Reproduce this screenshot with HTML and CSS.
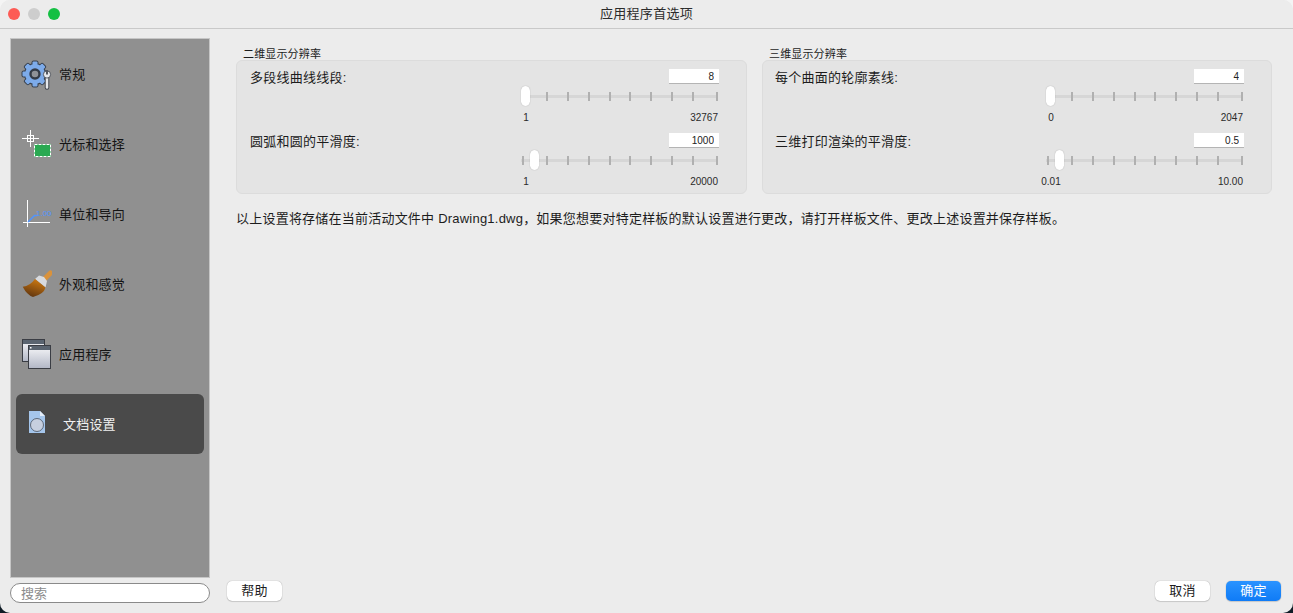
FILE: index.html
```html
<!DOCTYPE html>
<html lang="zh-CN">
<head>
<meta charset="utf-8">
<title>应用程序首选项</title>
<link rel="stylesheet" href="styles.css">
</head>
<body>
<div class="window">
  <header class="titlebar">
    <div class="lights"><span class="light red"></span><span class="light grey"></span><span class="light green"></span></div>
    <div class="title">应用程序首选项</div>
  </header>
  <div class="main">
    <aside class="left">
      <nav class="sidebar">
        <div class="item">
          <svg class="icon" viewBox="0 0 32 32">
            <g fill="#39414e">
              <circle cx="15" cy="16" r="11"/>
              <rect x="11.500" y="2.500" width="7" height="27" rx="2"/>
              <rect x="11.500" y="2.500" width="7" height="27" rx="2" transform="rotate(45 15 16)"/>
              <rect x="11.500" y="2.500" width="7" height="27" rx="2" transform="rotate(90 15 16)"/>
              <rect x="11.500" y="2.500" width="7" height="27" rx="2" transform="rotate(135 15 16)"/>
            </g>
            <g fill="#7dabea">
              <circle cx="15" cy="16" r="10"/>
              <rect x="12.500" y="3.500" width="5" height="25" rx="1"/>
              <rect x="12.500" y="3.500" width="5" height="25" rx="1" transform="rotate(45 15 16)"/>
              <rect x="12.500" y="3.500" width="5" height="25" rx="1" transform="rotate(90 15 16)"/>
              <rect x="12.500" y="3.500" width="5" height="25" rx="1" transform="rotate(135 15 16)"/>
            </g>
            <circle cx="15" cy="16" r="4.500" fill="#8f9298" stroke="#343b47" stroke-width="2.400"/>
            <path d="M27 19V29.500" stroke="#3a3f48" stroke-width="4.500" stroke-linecap="round"/>
            <path d="M27 19V29.500" stroke="#e6e8ec" stroke-width="2.600" stroke-linecap="round"/>
            <circle cx="27" cy="16.500" r="3.600" fill="#e6e8ec" stroke="#3a3f48" stroke-width="0.800"/>
            <rect x="26" y="12" width="2" height="4.500" fill="#52565e"/>
          </svg>
          <span>常规</span>
        </div>
        <div class="item">
          <svg class="icon" viewBox="0 0 32 32">
            <path d="M2 10.500H19M10.500 2V19" stroke="#fff" stroke-width="1"/>
            <rect x="7.500" y="7.500" width="6" height="6" fill="none" stroke="#fff" stroke-width="1"/>
            <rect x="14" y="16" width="17" height="13" fill="#2aa952"/>
            <rect x="14.500" y="16.500" width="16" height="12" fill="none" stroke="#fff" stroke-dasharray="3 1"/>
          </svg>
          <span>光标和选择</span>
        </div>
        <div class="item">
          <svg class="icon" viewBox="0 0 32 32">
            <path d="M7.500 2V29M3 24.500H30" stroke="#fff" stroke-width="1"/>
            <path d="M8 24L14.500 17.500H17" fill="none" stroke="#4f94ff" stroke-width="1.500"/>
            <text class="unit-text" x="16" y="18">1.00</text>
          </svg>
          <span>单位和导向</span>
        </div>
        <div class="item">
          <svg class="icon" viewBox="0 0 32 32">
            <defs>
              <linearGradient id="bristle" x1="0.7" y1="0" x2="0.3" y2="1">
                <stop offset="0" stop-color="#cf7a10"/>
                <stop offset="1" stop-color="#5f3510"/>
              </linearGradient>
            </defs>
            <path d="M30.500 5L24 11.500" stroke="#d9923c" stroke-width="5" stroke-linecap="round"/>
            <path d="M19 7.500L24 9L27 13L25.500 19.500L15 11Z" fill="#d8dade"/>
            <path d="M15 11L25.500 19.500Q24 26 13 29Q7 27 2.700 18.700Q10 18 15 11Z" fill="url(#bristle)"/>
          </svg>
          <span>外观和感觉</span>
        </div>
        <div class="item">
          <svg class="icon" viewBox="0 0 32 32">
            <defs>
              <linearGradient id="pane" x1="0" y1="0" x2="0" y2="1">
                <stop offset="0" stop-color="#f8f8fa"/>
                <stop offset="1" stop-color="#b2b7c6"/>
              </linearGradient>
            </defs>
            <rect x="2.500" y="1.500" width="22" height="22" fill="url(#pane)" stroke="#3a3d44"/>
            <rect x="3" y="2" width="21" height="4" fill="#5a6470"/>
            <rect x="8.500" y="7.500" width="22" height="23" fill="url(#pane)" stroke="#3a3d44"/>
            <rect x="9" y="8" width="21" height="4" fill="#5a6470"/>
            <rect x="10" y="9" width="1.500" height="1.500" fill="#fff"/>
          </svg>
          <span>应用程序</span>
        </div>
        <div class="item active">
          <svg class="icon" viewBox="0 0 32 32">
            <path d="M8 3H19L24 8V25H8Z" fill="#a5c6ec"/>
            <path d="M19 3L24 8H19Z" fill="#e4eefa"/>
            <circle cx="16" cy="17" r="6.500" fill="#c6cfdf" stroke="#47505e" stroke-width="0.8"/>
          </svg>
          <span>文档设置</span>
        </div>
      </nav>
      <input class="search" type="text" placeholder="搜索">
    </aside>
    <section class="content">
      <div class="groups">
        <div class="panel">
          <div class="panel-title">二维显示分辨率</div>
          <div class="group">
            <div class="control">
              <div class="head"><span class="label">多段线曲线线段:</span><input class="value" type="text" value="8"></div>
              <div class="slider">
                <div class="track"><i></i><i></i><i></i><i></i><i></i><i></i><i></i><i></i><i></i><i></i></div>
                <span class="thumb" style="left:0"></span>
              </div>
              <div class="scale"><span class="min"><b>1</b></span><span>32767</span></div>
            </div>
            <div class="control">
              <div class="head"><span class="label">圆弧和圆的平滑度:</span><input class="value" type="text" value="1000"></div>
              <div class="slider">
                <div class="track"><i></i><i></i><i></i><i></i><i></i><i></i><i></i><i></i><i></i><i></i></div>
                <span class="thumb" style="left:9px"></span>
              </div>
              <div class="scale"><span class="min"><b>1</b></span><span>20000</span></div>
            </div>
          </div>
        </div>
        <div class="panel">
          <div class="panel-title">三维显示分辨率</div>
          <div class="group group-right">
            <div class="control">
              <div class="head"><span class="label">每个曲面的轮廓素线:</span><input class="value" type="text" value="4"></div>
              <div class="slider">
                <div class="track"><i></i><i></i><i></i><i></i><i></i><i></i><i></i><i></i><i></i><i></i></div>
                <span class="thumb" style="left:0"></span>
              </div>
              <div class="scale"><span class="min"><b>0</b></span><span>2047</span></div>
            </div>
            <div class="control">
              <div class="head"><span class="label">三维打印渲染的平滑度:</span><input class="value" type="text" value="0.5"></div>
              <div class="slider">
                <div class="track"><i></i><i></i><i></i><i></i><i></i><i></i><i></i><i></i><i></i><i></i></div>
                <span class="thumb" style="left:9px"></span>
              </div>
              <div class="scale"><span class="min"><b>0.01</b></span><span>10.00</span></div>
            </div>
          </div>
        </div>
      </div>
      <p class="note">以上设置将存储在当前活动文件中 Drawing1.dwg，如果您想要对特定样板的默认设置进行更改，请打开样板文件、更改上述设置并保存样板。</p>
      <footer class="footer">
        <button class="btn" type="button">帮助</button>
        <div class="footer-right">
          <button class="btn" type="button">取消</button>
          <button class="btn primary" type="button">确定</button>
        </div>
      </footer>
    </section>
  </div>
</div>
</body>
</html>
```

FILE: styles.css
```css
* { box-sizing: border-box; }

html, body {
  margin: 0;
  height: 100%;
  overflow: hidden;
}

body {
  background: linear-gradient(#f4f4f4 50%, #101c26 50%);
  font-family: "Liberation Sans", "Noto Sans CJK SC", sans-serif;
  color: #1c1c1c;
}

.window {
  height: 613px;
  display: flex;
  flex-direction: column;
  background: #ececec;
  border-radius: 10px;
  overflow: hidden;
}

.titlebar {
  position: relative;
  height: 29px;
  flex: none;
  display: flex;
  align-items: center;
  justify-content: center;
  background: #ececec;
  border-bottom: 1px solid #c9c9c9;
}

.lights {
  position: absolute;
  left: 8px;
  top: 8px;
  display: flex;
  gap: 8px;
}

.light {
  width: 12px;
  height: 12px;
  border-radius: 50%;
}

.red { background: #fd5b55; }
.grey { background: #cdcdcd; }
.green { background: #14c043; }

.title {
  font-size: 13px;
  line-height: 28px;
  letter-spacing: 0.3px;
  color: #2c2c2c;
}

.main {
  flex: 1;
  min-height: 0;
  display: flex;
  padding: 9px 12px 10px 10px;
}

.left {
  width: 200px;
  flex: none;
  display: flex;
  flex-direction: column;
  gap: 5px;
}

.sidebar {
  flex: 1;
  display: flex;
  flex-direction: column;
  gap: 10px;
  padding: 5px;
  background: #909090;
  border: 1px solid #c6c6c6;
}

.item {
  height: 60px;
  flex: none;
  display: flex;
  align-items: center;
  gap: 7px;
  padding-left: 4px;
  font-size: 13px;
  letter-spacing: 0.2px;
  color: #141414;
  border-radius: 6px;
}

.item span { padding-bottom: 2px; }

.item.active {
  background: #4a4a4a;
  color: #f0f0f0;
  gap: 10px;
  padding-left: 5px;
}

.icon {
  width: 32px;
  height: 32px;
  flex: none;
}

.unit-text {
  font-size: 8px;
  letter-spacing: 0;
  fill: #4f94ff;
}

.search {
  height: 20px;
  flex: none;
  width: 100%;
  padding: 0 10px;
  background: #fff;
  border: 1px solid #8a8a8a;
  border-radius: 10px;
  font: 13px "Liberation Sans", "Noto Sans CJK SC", sans-serif;
  outline: none;
}

.search::placeholder {
  color: #8c8c8c;
  opacity: 1;
}

.content {
  flex: 1;
  min-width: 0;
  display: flex;
  flex-direction: column;
  padding: 10px 0 2px 17px;
}

.groups {
  display: grid;
  grid-template-columns: 511px 510px;
  gap: 15px;
  margin-left: 9px;
}

.panel-title {
  height: 12px;
  padding-left: 7px;
  font-size: 11px;
  line-height: 12px;
  letter-spacing: 0.15px;
}

.group {
  height: 134px;
  padding: 8px 27px 0 13px;
  background: #e4e4e4;
  border: 1px solid #dcdcdc;
  border-radius: 6px;
}

.group-right { padding-left: 12px; }

.control { height: 64px; }

.head {
  height: 15px;
  display: flex;
  justify-content: space-between;
  align-items: flex-start;
}

.label {
  font-size: 13px;
  line-height: 17px;
  letter-spacing: 0.25px;
}

.value {
  width: 50px;
  height: 15px;
  padding: 0 5px 0 0;
  border: 0;
  border-bottom: 1px solid #b4b4b4;
  background: #fff;
  text-align: right;
  font: 10px "Liberation Sans", sans-serif;
  color: #222;
  outline: none;
}

.slider {
  position: relative;
  height: 20px;
  margin: 2px 0 0 271px;
  display: flex;
  align-items: center;
}

.track {
  width: 196px;
  height: 3px;
  display: flex;
  align-items: center;
  background: #d6d6d6;
}

.track i {
  width: 1.5px;
  height: 9px;
  flex: none;
  margin-left: 19.5px;
  background: #b0b0b0;
}

.track i:nth-child(1) { margin-left: 1px; }
.track i:nth-child(2) { margin-left: 22.5px; }
.track i:nth-child(6) { margin-left: 18.5px; }
.track i:nth-child(10) { margin-left: 22.5px; }

.thumb {
  position: absolute;
  top: 0;
  width: 9px;
  height: 20px;
  background: #fff;
  border-radius: 5px;
  box-shadow: 0 0 1px rgba(0, 0, 0, 0.35);
}

.scale {
  height: 15px;
  margin: 4px 0 0 270px;
  padding-right: 1px;
  display: flex;
  justify-content: space-between;
  font-size: 10px;
  line-height: 15px;
  color: #2a2a2a;
}

.min {
  width: 12px;
  display: flex;
  justify-content: center;
  white-space: nowrap;
}

.min b { font-weight: 400; }

.note {
  margin: 16px 0 0 9px;
  font-size: 13px;
  line-height: 18px;
  letter-spacing: 0.22px;
}

.footer {
  margin-top: auto;
  display: flex;
  justify-content: space-between;
}

.footer-right {
  display: flex;
  gap: 16px;
}

.btn {
  width: 55px;
  height: 20px;
  padding: 0;
  border: 0;
  border-radius: 5px;
  background: #fff;
  box-shadow: 0 0 1px rgba(0, 0, 0, 0.4), 0 1px 1px rgba(0, 0, 0, 0.12);
  font: 13px/20px "Liberation Sans", "Noto Sans CJK SC", sans-serif;
  letter-spacing: 0.2px;
  color: #1c1c1c;
}

.primary {
  background: linear-gradient(#2a93ff, #0f7bf6);
  color: #fff;
}
```
